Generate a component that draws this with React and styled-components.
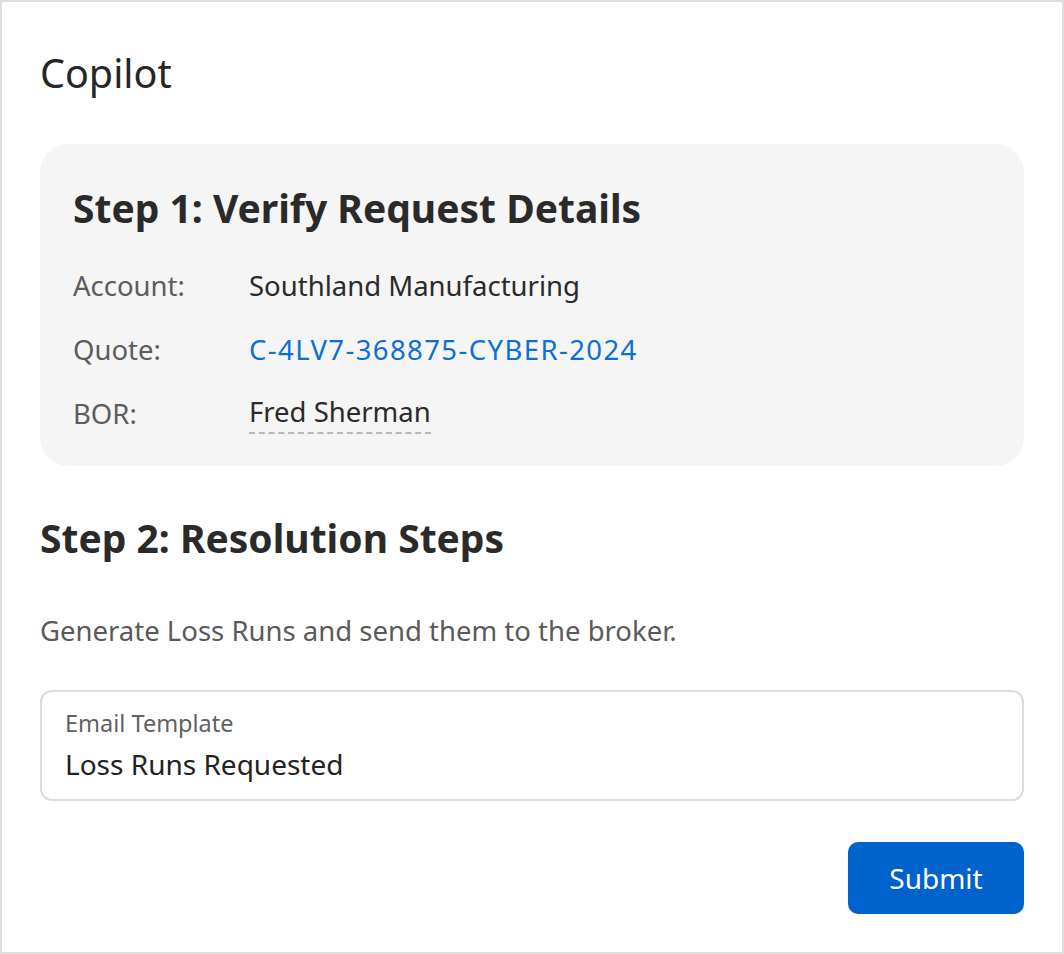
import React from 'react';
import styled, {createGlobalStyle} from 'styled-components';

const GlobalStyle = createGlobalStyle`
  html, body {
    margin: 0;
    padding: 0;
    background: #ffffff;
  }
  * {
    box-sizing: border-box;
  }
`

const Frame = styled('div')`
  width: 1064px;
  height: 954px;
  border: 2px solid #dedede;
  padding: 48px 38px 38px;
  display: flex;
  flex-direction: column;
  font-family: "Noto Sans", Roboto, sans-serif;
  color: #2a2a2a;
`

const PageTitle = styled('h1')`
  margin: 0;
  font-size: 39.5px;
  line-height: 46px;
  font-weight: 400;
  color: #262626;
`

const Card = styled('section')`
  margin-top: 48px;
  background: #f5f5f5;
  border-radius: 28px;
  padding: 41px 33px 21px;
`

const StepTitle = styled('h2')`
  margin: 0;
  font-size: 39px;
  line-height: 46px;
  font-weight: 700;
  color: #2a2a2a;
  margin-top: ${p => p.gap || 0}px;
`

const Details = styled('div')`
  margin-top: 22px;
  display: flex;
  flex-direction: column;
`

const Row = styled('div')`
  display: flex;
  align-items: center;
  height: 64px;
  font-size: 27.5px;
`

const Label = styled('span')`
  width: 176px;
  color: #5c5c5c;
`

const Value = styled('span')`
  color: #2a2a2a;
`

const QuoteLink = styled('a')`
  color: #0b6fd6;
  text-decoration: none;
  letter-spacing: 1.4px;
`

const Person = styled('span')`
  color: #2a2a2a;
  padding-bottom: 2px;
  border-bottom: 2px dashed #b8b8b8;
`

const Description = styled('p')`
  margin: 51px 0 0;
  font-size: 27.5px;
  line-height: 38px;
  color: #5a5a5a;
`

const Field = styled('div')`
  margin-top: 40px;
  height: 111px;
  border: 2px solid #dcdcdc;
  border-radius: 12px;
  padding: 15px 23px 0;
  display: flex;
  flex-direction: column;
`

const FieldLabel = styled('span')`
  font-size: 23.5px;
  line-height: 32px;
  color: #616161;
`

const FieldValue = styled('span')`
  margin-top: 7px;
  font-size: 28px;
  line-height: 36px;
  color: #222222;
`

const Actions = styled('div')`
  margin-top: 41px;
  display: flex;
  justify-content: flex-end;
`

const SubmitButton = styled('button')`
  width: 176px;
  height: 72px;
  border: none;
  border-radius: 10px;
  background: #0062cc;
  color: #ffffff;
  font-family: inherit;
  font-size: 28px;
  cursor: pointer;
`

const details = [
    {label: 'Account:', value: <Value>Southland Manufacturing</Value>},
    {label: 'Quote:', value: <QuoteLink href="#">C-4LV7-368875-CYBER-2024</QuoteLink>},
    {label: 'BOR:', value: <Person>Fred Sherman</Person>},
];

export default function App() {
    return (
        <Frame>
            <GlobalStyle/>
            <PageTitle>Copilot</PageTitle>
            <Card>
                <StepTitle>Step 1: Verify Request Details</StepTitle>
                <Details>
                    {details.map(d => (
                        <Row key={d.label}>
                            <Label>{d.label}</Label>
                            {d.value}
                        </Row>
                    ))}
                </Details>
            </Card>
            <StepTitle gap={49}>Step 2: Resolution Steps</StepTitle>
            <Description>Generate Loss Runs and send them to the broker.</Description>
            <Field>
                <FieldLabel>Email Template</FieldLabel>
                <FieldValue>Loss Runs Requested</FieldValue>
            </Field>
            <Actions>
                <SubmitButton>Submit</SubmitButton>
            </Actions>
        </Frame>
    );
}
